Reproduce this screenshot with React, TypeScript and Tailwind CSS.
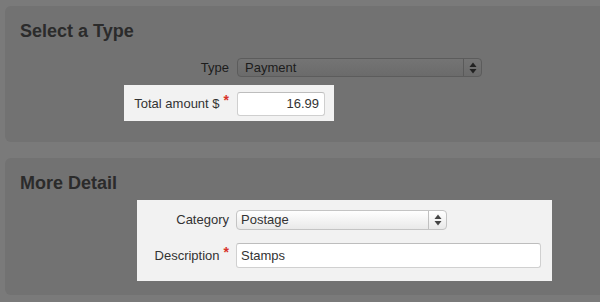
import React from "react";

const font = { fontFamily: '"Liberation Sans", Arial, Helvetica, sans-serif' };

function Arrows({ color }: { color: string }) {
  return (
    <svg width="8" height="12" viewBox="0 0 8 12">
      <path d="M4 0.5 L7.5 5 L0.5 5 Z" fill={color} />
      <path d="M4 11.5 L7.5 7 L0.5 7 Z" fill={color} />
    </svg>
  );
}

function Star() {
  return <span className="text-[#d8322a] font-bold text-[14px] relative top-[-3px] ml-[4px]">*</span>;
}

export default function App() {
  return (
    <div
      className="w-[600px] h-[302px] overflow-hidden bg-[#7a7a7a] flex flex-col pt-[6px] gap-[16px]"
      style={font}
    >
      {/* Panel 1 */}
      <div className="ml-[5px] w-[620px] h-[136px] shrink-0 rounded-[6px] bg-[#727272] pl-[15px] pt-[15px] flex flex-col">
        <div className="text-[18px] leading-[20px] font-bold text-[#2b2b2b]">Select a Type</div>
        <div className="flex items-center mt-[17px]">
          <div className="w-[209px] text-right text-[13px] text-[#1c1c1c]">Type</div>
          <div className="ml-[8px] w-[245px] h-[19px] rounded-[4px] border border-[#5c5c5c] bg-gradient-to-b from-[#747474] to-[#6b6b6b] flex items-center">
            <div className="flex-1 pl-[7px] text-[13px] text-[#1c1c1c] leading-[17px]">Payment</div>
            <div className="w-[18px] h-full border-l border-[#5a5a5a] flex items-center justify-center">
              <Arrows color="#222" />
            </div>
          </div>
        </div>
        <div className="mt-[7px] ml-[104px] w-[210px] h-[36px] bg-[#f2f2f2] flex items-start pt-[7px]">
          <div className="w-[105px] h-[24px] flex items-center justify-end text-[13px] text-[#333]">
            <span>Total amount $</span>
            <Star />
          </div>
          <div className="ml-[8px] w-[88px] h-[24px] bg-white border border-[#cfcfcf] border-t-[#bdbdbd] rounded-[3px] flex items-center justify-end pr-[5px] text-[13px] text-[#333]">
            16.99
          </div>
        </div>
      </div>

      {/* Panel 2 */}
      <div className="ml-[5px] w-[620px] h-[137px] shrink-0 rounded-[6px] bg-[#727272] pl-[15px] pt-[15px] flex flex-col">
        <div className="text-[18px] leading-[20px] font-bold text-[#2b2b2b]">More Detail</div>
        <div className="mt-[7px] ml-[117px] w-[415px] h-[81px] bg-[#f2f2f2] flex flex-col pt-[10px]">
          <div className="flex items-center">
            <div className="w-[92px] text-right text-[13px] text-[#333]">Category</div>
            <div className="ml-[7px] w-[211px] h-[20px] rounded-[4px] border border-[#c4c4c4] bg-gradient-to-b from-[#ffffff] to-[#e9e9e9] flex items-center">
              <div className="flex-1 pl-[4px] text-[13px] text-[#333] leading-[18px]">Postage</div>
              <div className="w-[18px] h-full border-l border-[#c0c0c0] flex items-center justify-center">
                <Arrows color="#444" />
              </div>
            </div>
          </div>
          <div className="flex items-center mt-[13px]">
            <div className="w-[92px] flex items-center justify-end text-[13px] text-[#333]">
              <span>Description</span>
              <Star />
            </div>
            <div className="ml-[7px] w-[305px] h-[25px] bg-white border border-[#d0d0d0] border-t-[#bdbdbd] rounded-[3px] flex items-center pl-[4px] text-[13px] text-[#333]">
              Stamps
            </div>
          </div>
        </div>
      </div>
    </div>
  );
}
